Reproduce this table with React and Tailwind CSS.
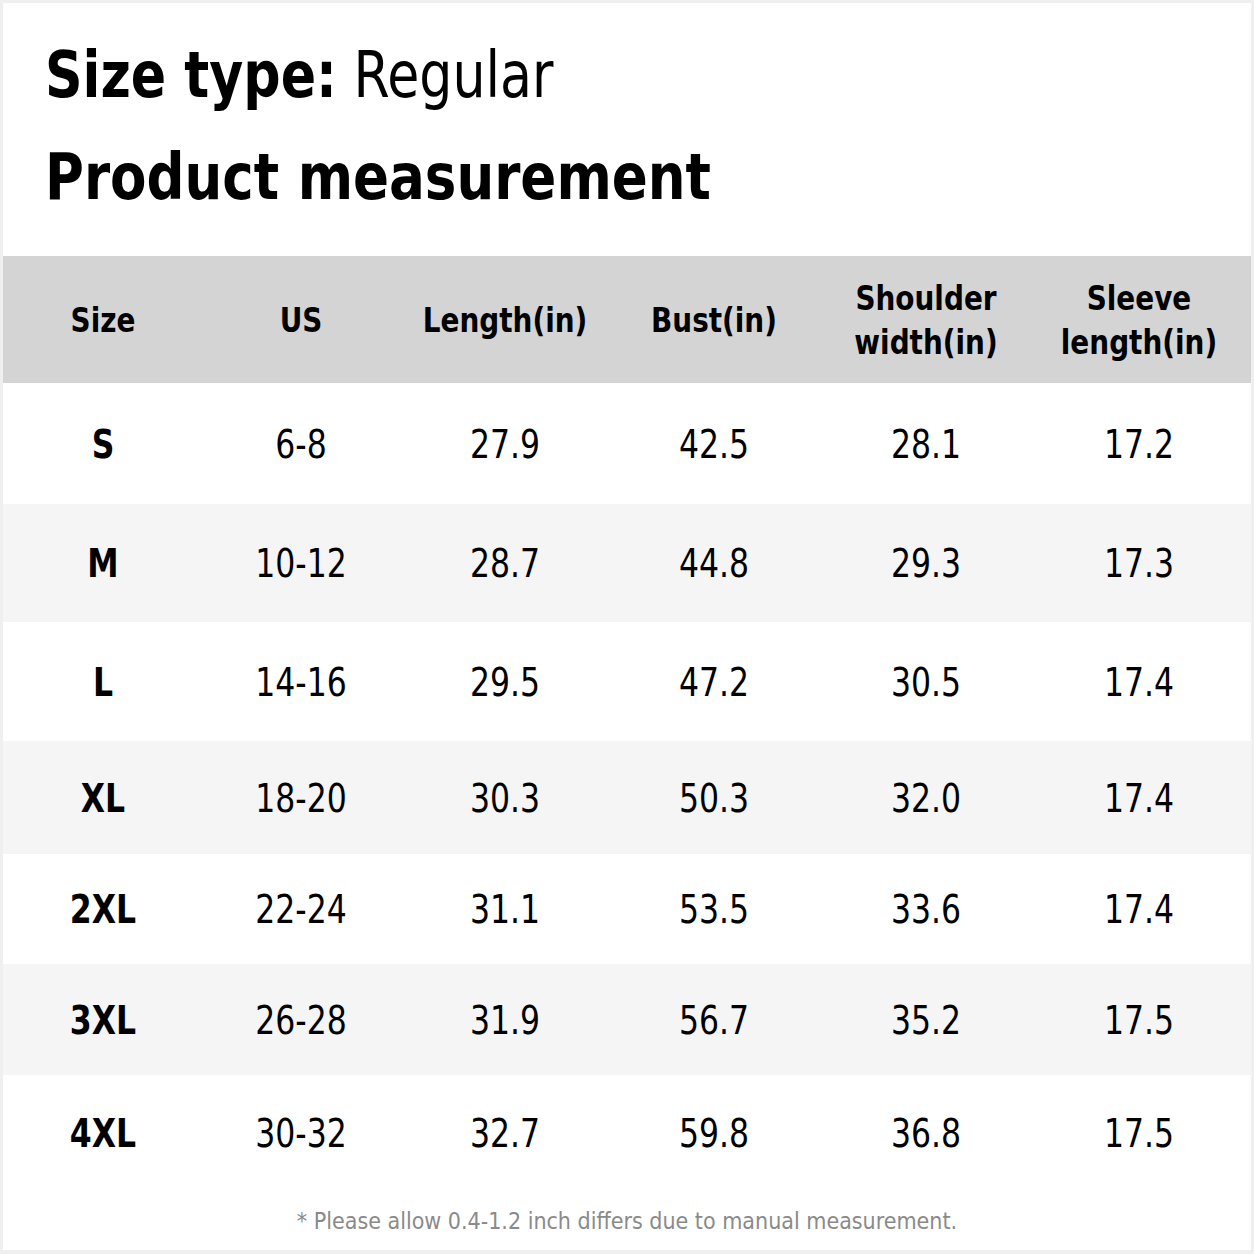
import React from "react";

const cols = ["Size", "US", "Length(in)", "Bust(in)", ["Shoulder", "width(in)"], ["Sleeve", "length(in)"]];

const rows = [
  { h: "h-[121px]", bg: "bg-white", d: ["S", "6-8", "27.9", "42.5", "28.1", "17.2"] },
  { h: "h-[118px]", bg: "bg-[#f5f5f5]", d: ["M", "10-12", "28.7", "44.8", "29.3", "17.3"] },
  { h: "h-[119px]", bg: "bg-white", d: ["L", "14-16", "29.5", "47.2", "30.5", "17.4"] },
  { h: "h-[113px]", bg: "bg-[#f5f5f5]", d: ["XL", "18-20", "30.3", "50.3", "32.0", "17.4"] },
  { h: "h-[110px]", bg: "bg-white", d: ["2XL", "22-24", "31.1", "53.5", "33.6", "17.4"] },
  { h: "h-[111px]", bg: "bg-[#f5f5f5]", d: ["3XL", "26-28", "31.9", "56.7", "35.2", "17.5"] },
  { h: "h-[115px]", bg: "bg-white", d: ["4XL", "30-32", "32.7", "59.8", "36.8", "17.5"] },
];

const grid = "grid grid-cols-[200px_196px_212px_206px_218px_216px]";
const font = "font-['DejaVu_Sans_Condensed','DejaVu_Sans',sans-serif] font-stretch-condensed";

export default function App() {
  return (
    <div className={`w-[1254px] h-[1254px] bg-[#efefef] pt-[3px] px-[3px] pb-[4px] ${font}`}>
      <div className="w-full h-full bg-white flex flex-col text-black">
        <div className="h-[253px] pl-[42px] flex flex-col">
          <div className="mt-[40px] h-[64px] text-[58px] leading-[64px] whitespace-nowrap scale-y-110">
            <span className="font-bold">Size type:</span> <span className="font-normal">Regular</span>
          </div>
          <div className="mt-[39px] h-[62px] text-[59px] leading-[62px] font-bold whitespace-nowrap scale-y-110">
            Product measurement
          </div>
        </div>
        <div className={`${grid} h-[127px] bg-[#d4d4d4]`}>
          {cols.map((c, i) => (
            <div
              key={i}
              className={`flex flex-col items-center justify-center text-[31px] leading-[44px] font-bold ${i === 5 ? "pr-[8px]" : ""}`}
            >
              {Array.isArray(c) ? (
                c.map((l) => (
                  <span key={l} className="inline-block scale-y-110">
                    {l}
                  </span>
                ))
              ) : (
                <span className="inline-block scale-y-110">{c}</span>
              )}
            </div>
          ))}
        </div>
        {rows.map((r, ri) => (
          <div key={ri} className={`${grid} ${r.h} ${r.bg}`}>
            {r.d.map((v, i) => (
              <div
                key={i}
                className={`flex items-center justify-center pt-[3px] text-[35px] leading-none ${i === 0 ? "font-bold" : "font-normal"} ${i === 5 ? "pr-[8px]" : ""}`}
              >
                <span className="inline-block scale-y-110">{v}</span>
              </div>
            ))}
          </div>
        ))}
        <div className="flex-1 flex items-center justify-center pt-[2px] text-[23px] text-[#8a8a8a]">
          * Please allow 0.4-1.2 inch differs due to manual measurement.
        </div>
      </div>
    </div>
  );
}
